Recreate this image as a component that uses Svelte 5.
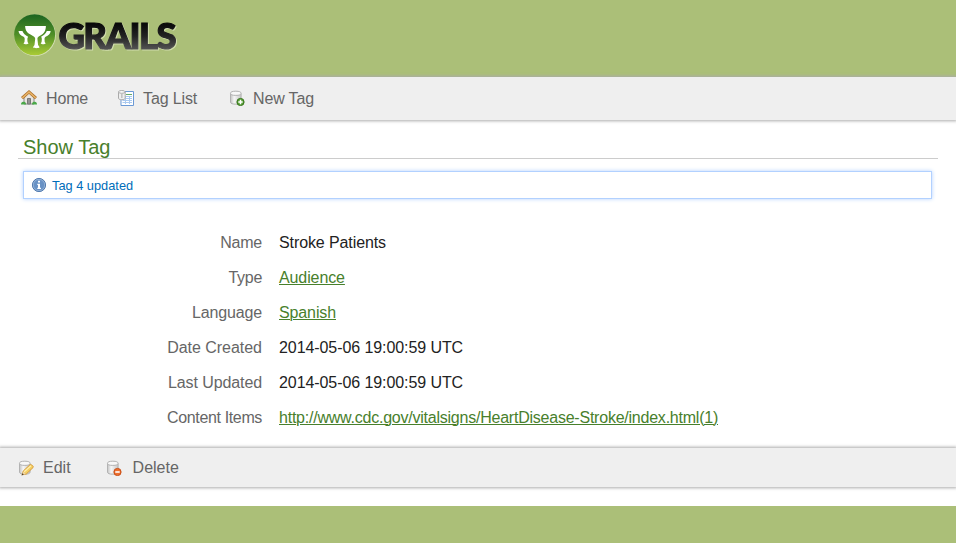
<script>
  const rows = [
    { label: 'Name', value: 'Stroke Patients', labelFit: -0.25, fit: -0.1 },
    { label: 'Type', value: 'Audience', link: true, labelFit: -0.3, fit: -0.1 },
    { label: 'Language', value: 'Spanish', link: true, labelFit: -0.15, fit: -0.12 },
    { label: 'Date Created', value: '2014-05-06 19:00:59 UTC', labelFit: -0.03, fit: -0.08 },
    { label: 'Last Updated', value: '2014-05-06 19:00:59 UTC', labelFit: -0.1, fit: -0.08 },
    { label: 'Content Items', value: 'http://www.cdc.gov/vitalsigns/HeartDisease-Stroke/index.html(1)', link: true, labelFit: -0.36, fit: -0.23 }
  ];
</script>

{#snippet database()}
  <path d="M1.5 3.5v8.7c0 1.3 2.2 2 5.3 2s5.3-.7 5.3-2V3.5z" fill="url(#cyl)" stroke="#b2b2b2" />
  <ellipse cx="6.8" cy="3.3" rx="5.3" ry="2.1" fill="#f8f8f8" stroke="#b2b2b2" />
{/snippet}

<header>
  <svg class="logo" width="240" height="76" viewBox="0 0 240 76" role="img" aria-label="Grails">
    <defs>
      <linearGradient id="disc" x1="0" y1="0" x2="0" y2="1">
        <stop offset="0" stop-color="#1c6420" /><stop offset=".5" stop-color="#508f27" /><stop offset="1" stop-color="#aacb36" />
      </linearGradient>
      <linearGradient id="ink" gradientUnits="userSpaceOnUse" x1="0" y1="22" x2="0" y2="50">
        <stop offset="0" stop-color="#050505" /><stop offset=".5" stop-color="#222" /><stop offset="1" stop-color="#555" />
      </linearGradient>
      <linearGradient id="cyl" x1="0" y1="0" x2="1" y2="0">
        <stop offset="0" stop-color="#c4c4c4" /><stop offset=".35" stop-color="#f6f6f6" /><stop offset="1" stop-color="#c6c6c6" />
      </linearGradient>
    </defs>
    <circle cx="35" cy="35.4" r="20.8" fill="#d5e0b5" />
    <circle cx="34.6" cy="34.7" r="20.5" fill="url(#disc)" />
    <g fill="#fff">
      <path d="M23.2 26h22.8c-.1 5-2 7.8-5.5 9.3-2 .9-2.9 1.9-3 3.3l.7 6.4 1.5 2.2c-1.2 1.2-5.4 1.2-6.6 0l1.5-2.2.7-6.4c-.1-1.4-1.1-2.4-3.1-3.3-4.5-1.7-6.8-4.4-7-9.3z" transform="translate(-.1 .1)" />
      <path d="M18.5 31h3.9c1 2.5 2.8 4.4 5.7 5.7-.7 1-.8 2-.7 3l.2 2.3.9 1.6c-.8 1-4.2 1-5 0l1-1.6.2-3.3c-.1-1-.5-1.7-1.1-2-3-1-4.7-3-5.1-5.7z" />
      <path d="M50.7 31h-3.9c-1 2.5-2.8 4.4-5.7 5.7.7 1 .8 2 .7 3l-.2 2.3-.9 1.6c.8 1 4.2 1 5 0l-1-1.6-.2-3.3c.1-1 .5-1.7 1.1-2 3-1 4.7-3 5.1-5.7z" />
    </g>
    <text class="word" x="58.5" y="48.8" textLength="118" lengthAdjust="spacing">GRAILS</text>
  </svg>
</header>

<nav class="top">
  <a href="#home">
    <svg width="16" height="16" viewBox="0 0 16 16">
      <path d="M3 8l5-5 5 5v6H3z" fill="#e8e5df" stroke="#898989" />
      <path d="M6.5 8.5h3V14h-3z" fill="#929292" stroke="#777" />
      <path d="M1 8.2l7-6.2 7 6.2" fill="none" stroke="#b07531" stroke-width="3" />
      <path d="M1.3 8l6.7-6 6.7 6" fill="none" stroke="#e9b467" stroke-width="1.6" />
      <path d="M0 14.5c0-2.3 1.5-3 2.5-2.7 1.5-.4 2.6.8 2.6 2.7zM11 14.5c0-2 1.2-3 2.3-2.7 1.5-.3 2.7.7 2.7 2.7z" fill="#49a848" />
    </svg>
    <span>Home</span>
  </a>
  <a href="#list" class="list">
    <svg width="16" height="16" viewBox="0 0 16 16">
      <path d="M3 1.5h12.5v14H3z" fill="#fff" stroke="#6b99d5" />
      <path d="M8 4.5h6" stroke="#66aa65" />
      <path d="M4.5 6.5H14M4.5 8.5H14M4.5 10.5H14M4.5 12.5H14M7.5 6v8M11.5 6v8" stroke="#a9c9f0" />
      <path d="M.5 2v6.2c0 .9 1.3 1.5 3.3 1.5s3.4-.6 3.4-1.5V2z" fill="#eee" stroke="#aaa" />
      <ellipse cx="3.8" cy="1.9" rx="3.3" ry="1.4" fill="#fafafa" stroke="#aaa" />
      <path d="M3.8 4v4" stroke="#c2c2c2" stroke-width="1.6" />
    </svg>
    <span>Tag List</span>
  </a>
  <a href="#new" class="new">
    <svg width="16" height="16" viewBox="0 0 16 16">
      {@render database()}
      <circle cx="11.5" cy="12" r="3.6" fill="#579e35" stroke="#38751d" />
      <path d="M9.3 12h4.4M11.5 9.8v4.4" stroke="#fff" stroke-width="1.5" />
    </svg>
    <span>New Tag</span>
  </a>
</nav>

<main>
  <h1>Show Tag</h1>
  <div class="message" role="status">
    <svg width="16" height="16" viewBox="0 0 16 16">
      <circle cx="8" cy="8" r="6.6" fill="#6992c5" stroke="#5179ad" />
      <circle cx="8" cy="8" r="5.7" fill="none" stroke="#a2bddd" stroke-width=".7" />
      <path d="M7 3.8h2v1.7H7zM6.3 6.7H9v4h1v1.2H6.3v-1.2H7V7.9h-.7z" fill="#fff" />
    </svg>
    <span>Tag 4 updated</span>
  </div>
  <dl>
    {#each rows as row}
      <div class="row">
        <dt style:letter-spacing="{row.labelFit}px">{row.label}</dt>
        <dd style:letter-spacing="{row.fit}px">{#if row.link}<a href="#detail">{row.value}</a>{:else}{row.value}{/if}</dd>
      </div>
    {/each}
  </dl>
</main>

<div class="buttons">
  <a href="#edit">
    <svg width="16" height="16" viewBox="0 0 16 16">
      {@render database()}
      <path d="M4.2 14.8l1-3.7 6.6-6.2c1-1 4.2 1 3.3 2.6L8.3 14z" fill="#f5cf62" stroke="#d79c39" />
      <path d="M6.2 11.8l6.8-6" stroke="#fff0ad" stroke-width="1.2" />
      <path d="M5.2 11.5l2.7 2.5-4.1 1.3z" fill="#efd6a8" />
      <path d="M4.4 13.2l1.5 1.4-2.4.8z" fill="#4a3b28" />
    </svg>
    <span>Edit</span>
  </a>
  <a href="#delete" class="delete">
    <svg width="16" height="16" viewBox="0 0 16 16">
      {@render database()}
      <circle cx="11.5" cy="12" r="3.6" fill="#ed7030" stroke="#c94d14" />
      <path d="M9.3 12h4.4" stroke="#fff" stroke-width="1.6" />
    </svg>
    <span>Delete</span>
  </a>
</div>
<footer></footer>

<style>
  :global(body) { background: #fff; }
  :global(#app) { font: 16px/20px "Liberation Sans", Arial, sans-serif; color: #333; }
  svg { display: block; flex: none; }
  .logo { overflow: visible; }
  header { height: 77px; background: #abbf78; }
  .word { font: 900 36.5px Lato, sans-serif; fill: url(#ink); stroke: url(#ink); stroke-width: 1.2px; filter: drop-shadow(1px 1px 0 #d0dcac); }
  nav, .buttons { position: relative; display: flex; align-items: center; background: #efefef; box-shadow: 0 0 3px 1px #aaa; box-sizing: border-box; }
  nav { height: 43px; padding-left: 21px; }
  nav a, .buttons a { display: flex; align-items: center; color: #666; text-decoration: none; }
  nav a { gap: 9px; letter-spacing: -0.15px; }
  nav svg { margin-top: -1px; }
  .list { margin-left: 30px; }
  .new { margin-left: 32px; gap: 8px; }
  main { display: flow-root; height: 328px; box-sizing: border-box; }
  h1 { margin: 15px 18px 0; height: 23px; padding: 0 5px; line-height: 24px; font-size: 20px; font-weight: normal; color: #48802c; border-bottom: 1px solid #ccc; }
  .message { display: flex; align-items: center; gap: 5px; box-sizing: border-box; width: 909px; height: 28px; margin: 12px 0 0 23px; padding-left: 7px; border: 1px solid #b2d1ff; box-shadow: 0 0 4px #b2d1ff; color: #006dba; font-size: 12.8px; }
  .message span { padding-top: 2px; }
  dl { margin: 26px 0 0; }
  .row { display: flex; height: 35px; align-items: center; gap: 17px; }
  dt { width: 262px; text-align: right; color: #666; }
  dd { margin: 0; color: #222; }
  dd a { color: #48802c; text-decoration: underline; text-decoration-thickness: 1px; }
  .buttons { height: 39px; padding-left: 18px; }
  .buttons a { gap: 9px; }
  .buttons .delete { margin-left: 35px; gap: 11px; }
  footer { margin-top: 19px; height: 37px; background: #abbf78; }
</style>
